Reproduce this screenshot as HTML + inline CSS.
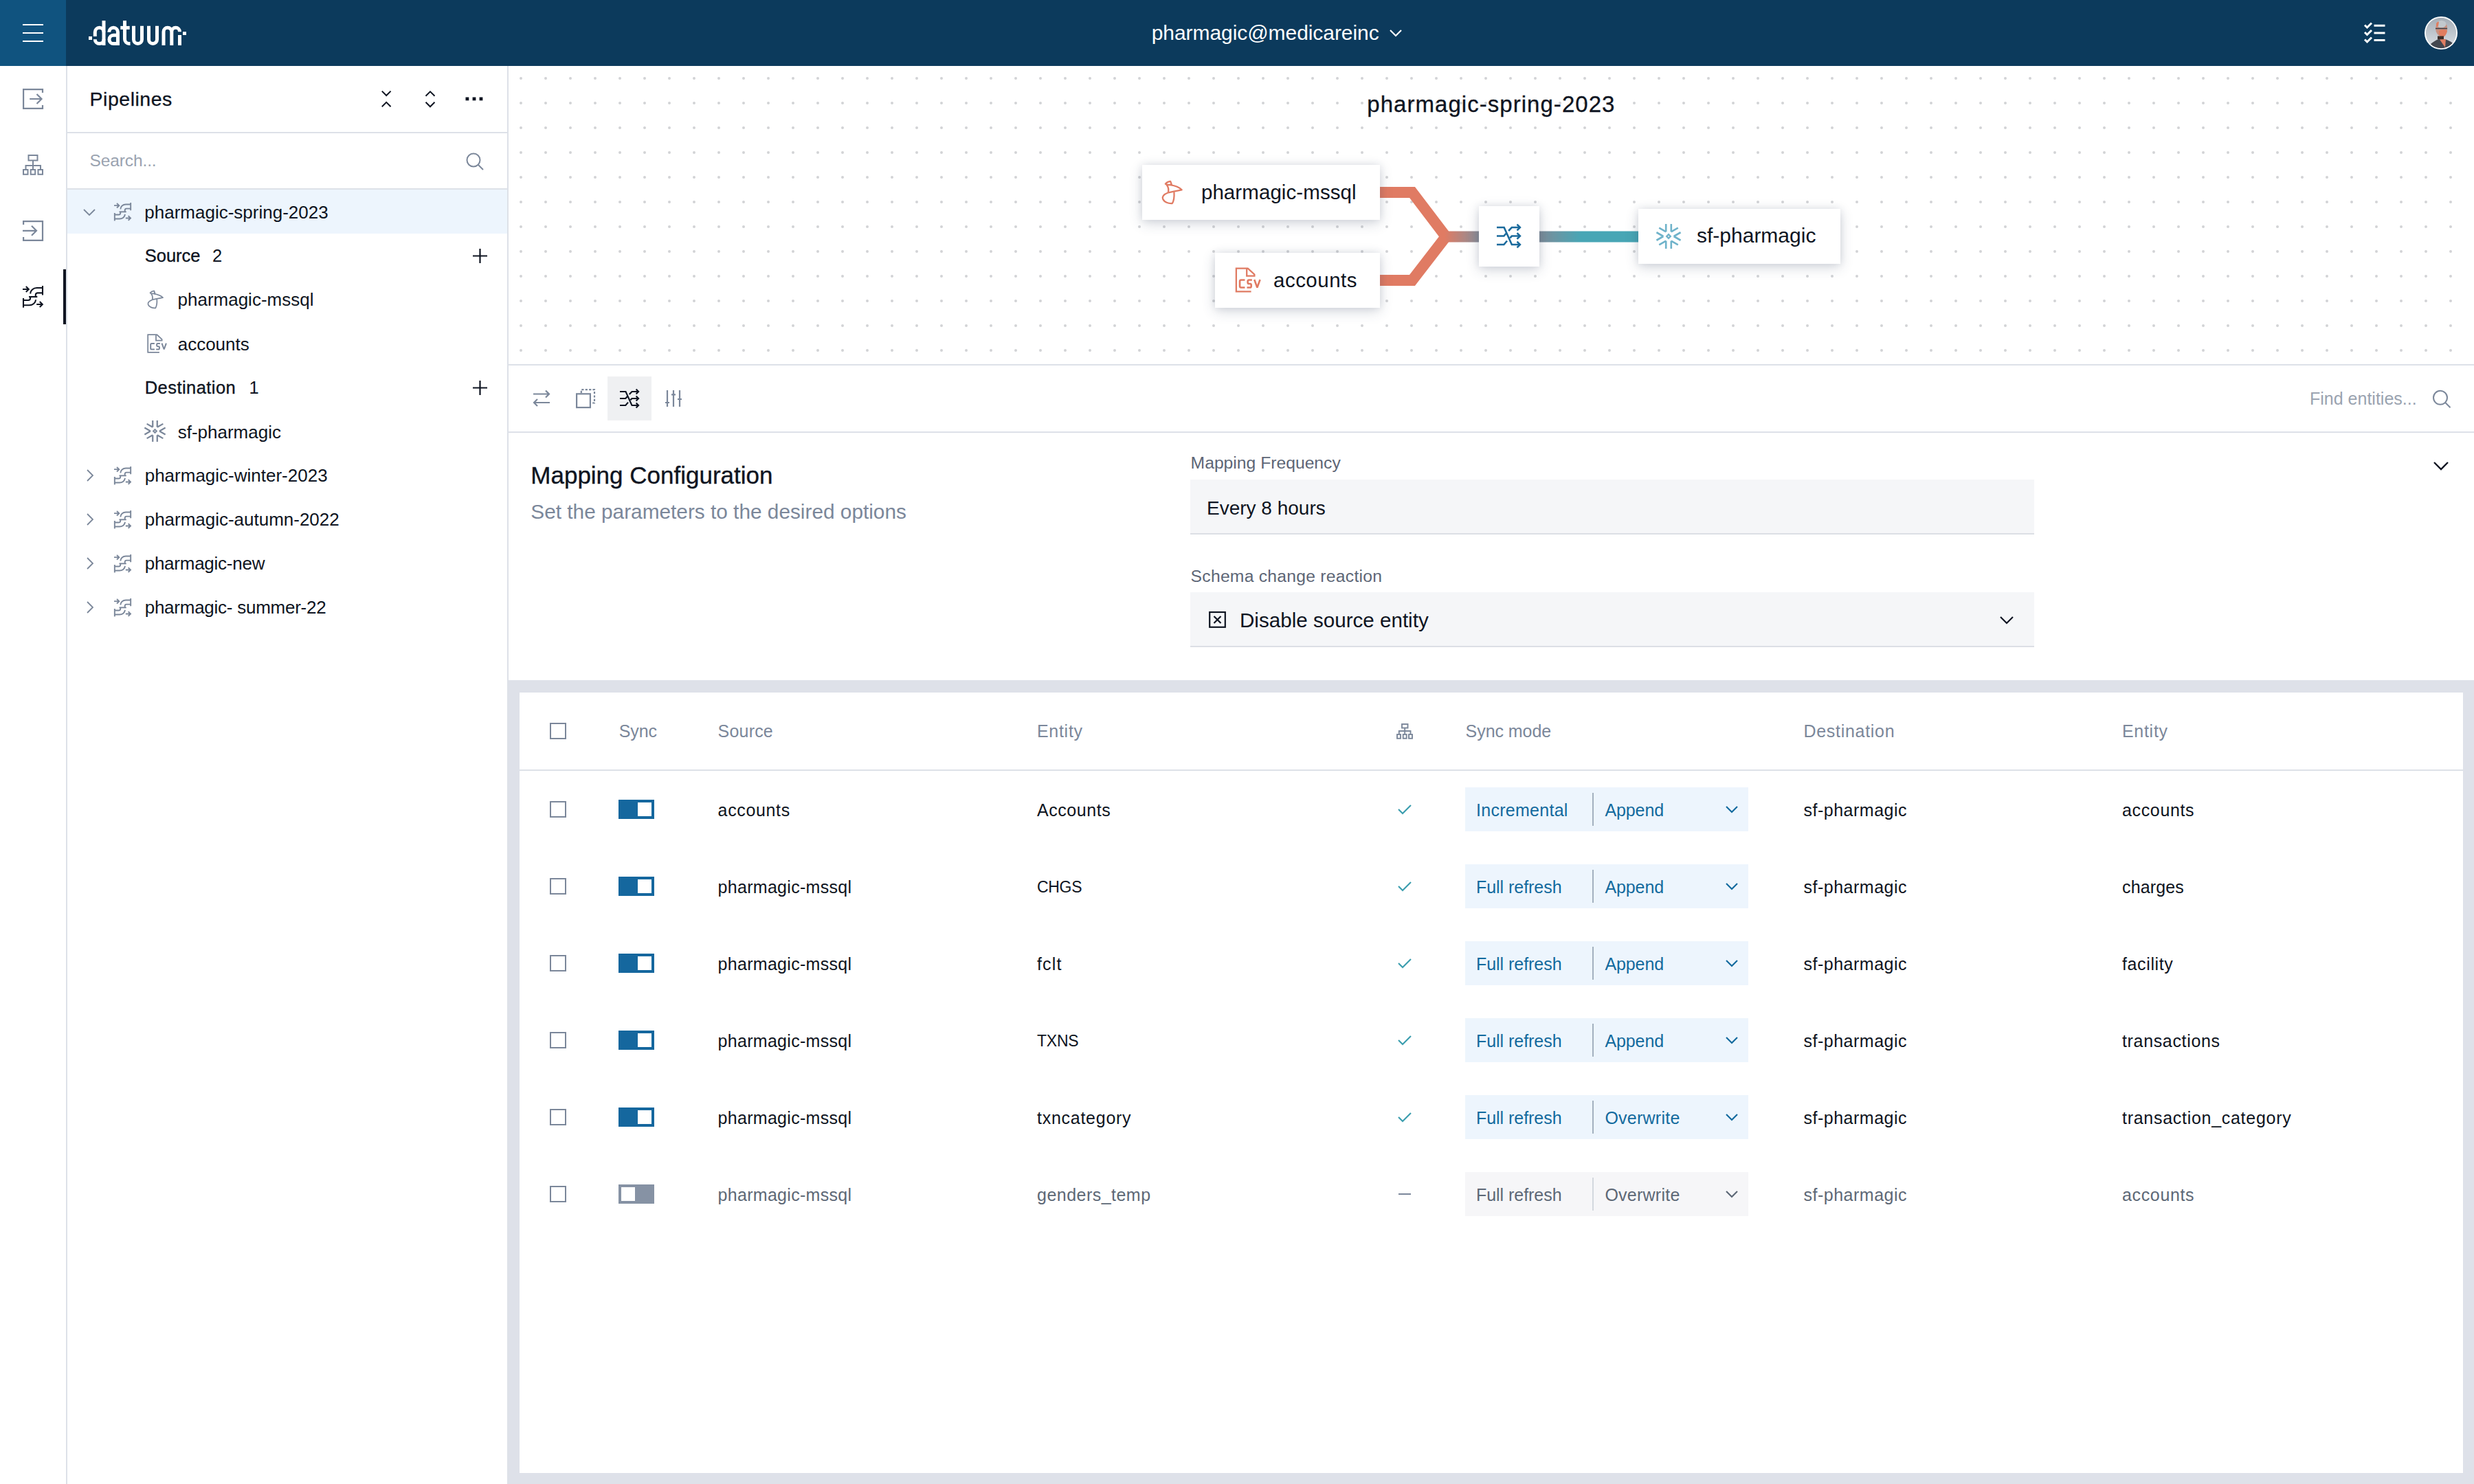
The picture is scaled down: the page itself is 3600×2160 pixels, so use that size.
<!DOCTYPE html>
<html><head><meta charset="utf-8"><title>datuum</title>
<style>
html,body{margin:0;padding:0;}
body{width:3600px;height:2160px;overflow:hidden;position:relative;background:#fff;font-family:"Liberation Sans",sans-serif;}
.a{position:absolute;}
.t{position:absolute;white-space:nowrap;font-family:"Liberation Sans",sans-serif;}
svg{overflow:visible;}
</style></head><body>
<div class="a" style="left:0px;top:0px;width:3600px;height:96px;background:#0c3a5c;"></div>
<div class="a" style="left:0px;top:0px;width:96px;height:96px;background:#10537f;"></div>
<svg class="a" style="left:0px;top:0px;" width="96" height="96" viewBox="0 0 96 96" fill="none"><path d="M33 36H63M33 48H63M33 60H63" stroke="#fff" stroke-width="2.2"/></svg>
<svg class="a" style="left:120px;top:20px;" width="160" height="56" viewBox="120 20 160 56" fill="none"><g stroke="#fff" stroke-width="5" fill="none"><path d="M151 30V66"/><path d="M151 46.65A6.35 6.35 0 0 0 138.3 46.65V53"/><path d="M138.3 58V57.15A6.35 6.35 0 0 0 151 57.15"/><path d="M158.75 46.65A6.35 6.35 0 0 1 171.45 46.65V66"/><path d="M171.45 51.3H165.1A6.1 6.1 0 0 0 165.1 63.5H171.45"/><path d="M181.5 30V57A6.5 6.5 0 0 0 188 63.5H189.5"/><path d="M175.3 40.4H188.7"/><path d="M194.5 37.8V57.5A6 6 0 0 0 206.5 57.5V37.8"/><path d="M216.5 37.8V57.5A6 6 0 0 0 228.5 57.5V37.8"/><path d="M238 66V46.2A5.9 5.9 0 0 1 249.8 46.2V66M249.8 46.2A5.85 5.85 0 0 1 261.5 46.2M261.5 51V66"/></g><rect x="129" y="53" width="5" height="5" fill="#fff"/><rect x="266" y="46.2" width="5" height="4.8" fill="#fff"/></svg>
<div class="t " style="left:1675.7px;top:32.81px;font-size:30px;line-height:30px;color:#ffffff;letter-spacing:-0.062px;">pharmagic@medicareinc</div>
<svg class="a" style="left:2018px;top:36px;" width="26" height="24" viewBox="0 0 26 24" fill="none"><path d="M5 8L13 16L21 8" stroke="#fff" stroke-width="2.2"/></svg>
<svg class="a" style="left:3440px;top:0px;" width="32" height="96" viewBox="0 0 32 96" fill="none"><g stroke="#fff" stroke-width="3" fill="none"><path d="M1 36.5L4.5 40L11 33.5"/><path d="M1 47L4.5 50.5L11 44"/><path d="M1 57.5L4.5 61L11 54.5"/><path d="M14.5 37.3H30.5M14.5 47.9H30.5M14.5 58.5H30.5"/></g></svg>
<svg class="a" style="left:3528px;top:24px;" width="48" height="48" viewBox="0 0 48 48" fill="none"><defs><clipPath id="avc"><circle cx="24" cy="24" r="22.2"/></clipPath><linearGradient id="avg" x1="0" y1="0" x2="0" y2="1"><stop offset="0" stop-color="#a3abb4"/><stop offset="0.6" stop-color="#c5ccd3"/><stop offset="1" stop-color="#dfe2e6"/></linearGradient></defs><circle cx="24" cy="24" r="24" fill="#fff"/><g clip-path="url(#avc)"><rect width="48" height="48" fill="url(#avg)"/><ellipse cx="24.7" cy="17.5" rx="8.6" ry="11.3" fill="#c99080"/><ellipse cx="24.6" cy="11" rx="7" ry="5.2" fill="#c2c8cd"/><path d="M17 10.5C18 8 20 7 21 8L20 14L17 15Z" fill="#e07e60"/><path d="M21 21C24 19 30 18 33 21C32 27 29 30 25 30C22 29 21 26 21 21Z" fill="#e07d5f"/><path d="M16 17.5H33" stroke="#3a4048" stroke-width="1.3"/><rect x="19" y="28.5" width="9" height="5" fill="#3b2e29"/><path d="M6 48L8 41C12 37 17 34 21 33L30 33C35 35 40 37 43 41L45 48Z" fill="#43474f"/><path d="M22 33.5L31 33L30 45Z" fill="#df7e62"/></g></svg>
<div class="a" style="left:96px;top:96px;width:2px;height:2064px;background:#dde1e8;"></div>
<svg class="a" style="left:0px;top:96px;" width="96" height="96" viewBox="0 96 96 96" fill="none"><g stroke="#7b879a" stroke-width="2.2" fill="none"><path d="M62 135V130.1H34.1V157.8H62V153"/><path d="M43.2 144H60.5M53.5 137L60.5 144L53.5 151"/></g></svg>
<svg class="a" style="left:0px;top:192px;" width="96" height="96" viewBox="0 192 96 96" fill="none"><g stroke="#7b879a" stroke-width="2" fill="none"><rect x="41.5" y="226" width="13" height="7.5"/><path d="M48 233.5V241M37.5 246V241H59V246M48 241V246"/><rect x="34" y="247" width="6.5" height="6.8"/><rect x="44.7" y="247" width="6.5" height="6.8"/><rect x="55.5" y="247" width="6.5" height="6.8"/></g></svg>
<svg class="a" style="left:0px;top:288px;" width="96" height="96" viewBox="0 288 96 96" fill="none"><g stroke="#7b879a" stroke-width="2.2" fill="none"><path d="M34.1 327V322.1H62V349.8H34.1V345"/><path d="M33 335.8H53M46 328.8L53 335.8L46 342.8"/></g></svg>
<svg class="a" style="left:33px;top:416px;" width="30" height="32" viewBox="0 0 30 32" fill="none"><g stroke="#0e1421" stroke-width="2.1" fill="none"><path d="M0 5H8.5M4.8 1L8.8 5L4.8 9"/><path d="M29 0V13.5"/><path d="M29 3H20.5A9.3 8.5 0 0 0 11.2 11.5"/><path d="M29 10.4H21.5A3 3 0 0 0 18.8 13.4V16"/><path d="M9 16H21.3"/><path d="M11.1 16V18A3 3 0 0 1 8.1 21H1"/><path d="M1 18V31.7"/><path d="M1 28.3H9.5A9.6 8.5 0 0 0 19.1 20.3"/><path d="M20.2 27H29M24.8 23L28.8 27L24.8 31"/></g></svg>
<div class="a" style="left:92px;top:392px;width:4px;height:80px;background:#0e1421;"></div>
<div class="a" style="left:738px;top:96px;width:2px;height:2064px;background:#dde1e8;"></div>
<div class="t " style="left:130.6px;top:130.37px;font-size:28.5px;line-height:28.5px;color:#0e1421;letter-spacing:0.5px;-webkit-text-stroke:0.3px #0e1421;">Pipelines</div>
<svg class="a" style="left:540px;top:110px;" width="180" height="70" viewBox="540 110 180 70" fill="none"><g stroke="#0e1421" stroke-width="2" fill="none"><path d="M555.8 132.6L562.2 139L568.6 132.6"/><path d="M555.8 155.2L562.2 148.8L568.6 155.2"/><path d="M619.5 139.8L626 133.3L632.5 139.8"/><path d="M619.5 148.8L626 155.3L632.5 148.8"/></g><g fill="#0e1421"><rect x="677.5" y="141.5" width="4.8" height="4.8"/><rect x="687.6" y="141.5" width="4.8" height="4.8"/><rect x="697.6" y="141.5" width="4.8" height="4.8"/></g></svg>
<div class="a" style="left:98px;top:192px;width:640px;height:2px;background:#dde1e8;"></div>
<div class="t " style="left:130.6px;top:222.26px;font-size:24.5px;line-height:24.5px;color:#9aa3b0;letter-spacing:-0.125px;">Search...</div>
<svg class="a" style="left:670px;top:214px;" width="40" height="40" viewBox="670 214 40 40" fill="none"><g stroke="#7b879a" stroke-width="2" fill="none"><circle cx="689" cy="233" r="9.5"/><path d="M696 240L703 247"/></g></svg>
<div class="a" style="left:98px;top:274px;width:640px;height:2px;background:#dde1e8;"></div>
<div class="a" style="left:98px;top:276px;width:640px;height:64px;background:#edf5fd;"></div>
<svg class="a" style="left:120px;top:299px;" width="20" height="20" viewBox="0 0 20 20" fill="none"><path d="M2 6L10 14L18 6" stroke="#7b879a" stroke-width="1.8"/></svg>
<svg class="a" style="left:165.5px;top:295px;" width="25" height="26.666666666666668" viewBox="0 0 30 32" fill="none"><g stroke="#7b879a" stroke-width="2.3" fill="none"><path d="M0 5H8.5M4.8 1L8.8 5L4.8 9"/><path d="M29 0V13.5"/><path d="M29 3H20.5A9.3 8.5 0 0 0 11.2 11.5"/><path d="M29 10.4H21.5A3 3 0 0 0 18.8 13.4V16"/><path d="M9 16H21.3"/><path d="M11.1 16V18A3 3 0 0 1 8.1 21H1"/><path d="M1 18V31.7"/><path d="M1 28.3H9.5A9.6 8.5 0 0 0 19.1 20.3"/><path d="M20.2 27H29M24.8 23L28.8 27L24.8 31"/></g></svg>
<div class="t " style="left:210.3px;top:295.79px;font-size:26px;line-height:26px;color:#0e1421;">pharmagic-spring-2023</div>
<div class="t " style="left:210.7px;top:359.71px;font-size:25.5px;line-height:25.5px;color:#0e1421;-webkit-text-stroke:0.35px #0e1421;">Source</div>
<div class="t " style="left:309px;top:359.71px;font-size:25.5px;line-height:25.5px;color:#0e1421;">2</div>
<svg class="a" style="left:688px;top:361.5px;" width="21" height="21" viewBox="0 0 21 21" fill="none"><path d="M10.5 0V21M0 10.5H21" stroke="#0e1421" stroke-width="2.2"/></svg>
<svg class="a" style="left:214px;top:422px;" width="24.0" height="28.0" viewBox="0 0 24 28" fill="none"><g stroke="#7b879a" stroke-width="1.75" fill="none" stroke-linejoin="round"><path d="M4.5 4.4C6 2.6 8.5 1.6 10.2 1.4L11.5 5.1C9 5.6 6 5.8 4.5 4.4Z"/><path d="M5.8 5.2C7.6 7.5 8.6 10.4 7.6 13.9"/><path d="M10 5.6C15.5 6.5 20 8.2 23 11.1C18 12 12.5 13 7.8 14.2"/><path d="M7.8 14.2C3.2 16 0.6 18.6 1.6 21.3C3.2 25 8 26.8 12.2 26.4C14 23.8 14.7 20 14.3 13.4"/></g></svg>
<div class="t " style="left:258.5px;top:423.19px;font-size:26px;line-height:26px;color:#0e1421;">pharmagic-mssql</div>
<svg class="a" style="left:213px;top:485px;" width="30.0" height="30.0" viewBox="0 0 30 30" fill="none"><g stroke="#7b879a" fill="none"><g stroke-width="1.75"><path d="M15.6 2H2.2V27.9H18.9"/><path d="M14 2.3V10.5H22.6V8.8L15.2 2"/></g><g stroke-width="2.0"><path d="M11.9 15H7.7Q6.2 15 6.2 16.5V22Q6.2 23.5 7.7 23.5H11.9"/><path d="M19.9 15H16.5Q15.1 15 15.1 16.4V17.8Q15.1 19.2 16.5 19.2H17.6Q19 19.2 19 20.6V22.1Q19 23.5 17.6 23.5H14.2"/><path d="M22.5 14.6L25.7 23.5L28.9 14.6" stroke-linejoin="bevel"/></g></g></svg>
<div class="t " style="left:258.7px;top:487.59px;font-size:26px;line-height:26px;color:#0e1421;">accounts</div>
<div class="t " style="left:210.7px;top:552.21px;font-size:25.5px;line-height:25.5px;color:#0e1421;letter-spacing:0.45px;-webkit-text-stroke:0.35px #0e1421;">Destination</div>
<div class="t " style="left:362.6px;top:552.21px;font-size:25.5px;line-height:25.5px;color:#0e1421;">1</div>
<svg class="a" style="left:688px;top:553.5px;" width="21" height="21" viewBox="0 0 21 21" fill="none"><path d="M10.5 0V21M0 10.5H21" stroke="#0e1421" stroke-width="2.2"/></svg>
<svg class="a" style="left:210px;top:612px;" width="31" height="31" viewBox="0 0 36 36" fill="none"><path d="M35.56 23.75L25.60 18.00M35.56 12.25L25.60 18.00M31.76 5.67L21.80 11.42M21.80 -0.08L21.80 11.42M14.20 -0.08L14.20 11.42M4.24 5.67L14.20 11.42M0.44 12.25L10.40 18.00M0.44 23.75L10.40 18.00M4.24 30.33L14.20 24.58M14.20 36.08L14.20 24.58M21.80 36.08L21.80 24.58M31.76 30.33L21.80 24.58" stroke="#7b879a" stroke-width="2.6" fill="none"/><path d="M18 13.6L22.4 18L18 22.4L13.6 18Z" fill="#7b879a"/><rect x="17" y="17" width="2" height="2" fill="#d9dde2"/></svg>
<div class="t " style="left:258.7px;top:615.59px;font-size:26px;line-height:26px;color:#0e1421;">sf-pharmagic</div>
<svg class="a" style="left:121px;top:681.9px;" width="20" height="20" viewBox="0 0 20 20" fill="none"><path d="M6 2L14 10L6 18" stroke="#7b879a" stroke-width="1.8"/></svg>
<svg class="a" style="left:165.5px;top:678.9px;" width="25" height="26.666666666666668" viewBox="0 0 30 32" fill="none"><g stroke="#7b879a" stroke-width="2.3" fill="none"><path d="M0 5H8.5M4.8 1L8.8 5L4.8 9"/><path d="M29 0V13.5"/><path d="M29 3H20.5A9.3 8.5 0 0 0 11.2 11.5"/><path d="M29 10.4H21.5A3 3 0 0 0 18.8 13.4V16"/><path d="M9 16H21.3"/><path d="M11.1 16V18A3 3 0 0 1 8.1 21H1"/><path d="M1 18V31.7"/><path d="M1 28.3H9.5A9.6 8.5 0 0 0 19.1 20.3"/><path d="M20.2 27H29M24.8 23L28.8 27L24.8 31"/></g></svg>
<div class="t " style="left:210.7px;top:678.89px;font-size:26px;line-height:26px;color:#0e1421;letter-spacing:0.0px;">pharmagic-winter-2023</div>
<svg class="a" style="left:121px;top:746.3px;" width="20" height="20" viewBox="0 0 20 20" fill="none"><path d="M6 2L14 10L6 18" stroke="#7b879a" stroke-width="1.8"/></svg>
<svg class="a" style="left:165.5px;top:743.3px;" width="25" height="26.666666666666668" viewBox="0 0 30 32" fill="none"><g stroke="#7b879a" stroke-width="2.3" fill="none"><path d="M0 5H8.5M4.8 1L8.8 5L4.8 9"/><path d="M29 0V13.5"/><path d="M29 3H20.5A9.3 8.5 0 0 0 11.2 11.5"/><path d="M29 10.4H21.5A3 3 0 0 0 18.8 13.4V16"/><path d="M9 16H21.3"/><path d="M11.1 16V18A3 3 0 0 1 8.1 21H1"/><path d="M1 18V31.7"/><path d="M1 28.3H9.5A9.6 8.5 0 0 0 19.1 20.3"/><path d="M20.2 27H29M24.8 23L28.8 27L24.8 31"/></g></svg>
<div class="t " style="left:210.7px;top:743.29px;font-size:26px;line-height:26px;color:#0e1421;letter-spacing:-0.013px;">pharmagic-autumn-2022</div>
<svg class="a" style="left:121px;top:810px;" width="20" height="20" viewBox="0 0 20 20" fill="none"><path d="M6 2L14 10L6 18" stroke="#7b879a" stroke-width="1.8"/></svg>
<svg class="a" style="left:165.5px;top:807px;" width="25" height="26.666666666666668" viewBox="0 0 30 32" fill="none"><g stroke="#7b879a" stroke-width="2.3" fill="none"><path d="M0 5H8.5M4.8 1L8.8 5L4.8 9"/><path d="M29 0V13.5"/><path d="M29 3H20.5A9.3 8.5 0 0 0 11.2 11.5"/><path d="M29 10.4H21.5A3 3 0 0 0 18.8 13.4V16"/><path d="M9 16H21.3"/><path d="M11.1 16V18A3 3 0 0 1 8.1 21H1"/><path d="M1 18V31.7"/><path d="M1 28.3H9.5A9.6 8.5 0 0 0 19.1 20.3"/><path d="M20.2 27H29M24.8 23L28.8 27L24.8 31"/></g></svg>
<div class="t " style="left:210.7px;top:806.99px;font-size:26px;line-height:26px;color:#0e1421;letter-spacing:-0.25px;">pharmagic-new</div>
<svg class="a" style="left:121px;top:874px;" width="20" height="20" viewBox="0 0 20 20" fill="none"><path d="M6 2L14 10L6 18" stroke="#7b879a" stroke-width="1.8"/></svg>
<svg class="a" style="left:165.5px;top:871px;" width="25" height="26.666666666666668" viewBox="0 0 30 32" fill="none"><g stroke="#7b879a" stroke-width="2.3" fill="none"><path d="M0 5H8.5M4.8 1L8.8 5L4.8 9"/><path d="M29 0V13.5"/><path d="M29 3H20.5A9.3 8.5 0 0 0 11.2 11.5"/><path d="M29 10.4H21.5A3 3 0 0 0 18.8 13.4V16"/><path d="M9 16H21.3"/><path d="M11.1 16V18A3 3 0 0 1 8.1 21H1"/><path d="M1 18V31.7"/><path d="M1 28.3H9.5A9.6 8.5 0 0 0 19.1 20.3"/><path d="M20.2 27H29M24.8 23L28.8 27L24.8 31"/></g></svg>
<div class="t " style="left:210.7px;top:870.99px;font-size:26px;line-height:26px;color:#0e1421;letter-spacing:-0.25px;">pharmagic- summer-22</div>
<svg class="a" style="left:740px;top:96px" width="2860" height="434"><defs><pattern id="dp" x="0" y="0" width="36" height="36" patternUnits="userSpaceOnUse"><circle cx="18" cy="18" r="2" fill="#d2d3d6"/></pattern></defs><rect width="2860" height="434" fill="url(#dp)"/></svg>
<div class="t " style="left:1989.3px;top:134.67px;font-size:33px;line-height:33px;color:#0e1421;letter-spacing:1.038px;-webkit-text-stroke:0.3px #0e1421;">pharmagic-spring-2023</div>
<svg class="a" style="left:1990px;top:260px;" width="420" height="170" viewBox="1990 260 420 170" fill="none"><defs><linearGradient id="g1" x1="2102" y1="0" x2="2152" y2="0" gradientUnits="userSpaceOnUse"><stop offset="0" stop-color="#e07b63"/><stop offset="1" stop-color="#8a8f99"/></linearGradient><linearGradient id="g2" x1="2240" y1="0" x2="2300" y2="0" gradientUnits="userSpaceOnUse"><stop offset="0" stop-color="#7e8c99"/><stop offset="1" stop-color="#48a6b5"/></linearGradient></defs><path d="M2000 280H2055L2104 344.5L2055 408H2000" stroke="#e07b63" stroke-width="16" fill="none" stroke-linejoin="miter"/><path d="M2100 344.5H2156" stroke="url(#g1)" stroke-width="16"/><path d="M2236 344.5H2390" stroke="url(#g2)" stroke-width="16"/></svg>
<div class="a" style="left:1662px;top:240px;width:346px;height:80px;background:#fff;box-shadow:0 5px 18px rgba(45,60,90,0.20),0 0 10px rgba(45,60,90,0.10);"></div>
<div class="a" style="left:1768px;top:368px;width:240px;height:80px;background:#fff;box-shadow:0 5px 18px rgba(45,60,90,0.20),0 0 10px rgba(45,60,90,0.10);"></div>
<div class="a" style="left:2152px;top:300px;width:88px;height:88px;background:#fff;box-shadow:0 5px 18px rgba(45,60,90,0.20),0 0 10px rgba(45,60,90,0.10);"></div>
<div class="a" style="left:2384px;top:304px;width:294px;height:80px;background:#fff;box-shadow:0 5px 18px rgba(45,60,90,0.20),0 0 10px rgba(45,60,90,0.10);"></div>
<svg class="a" style="left:1690.1px;top:262px;" width="30.96" height="36.120000000000005" viewBox="0 0 24 28" fill="none"><g stroke="#e07b63" stroke-width="1.75" fill="none" stroke-linejoin="round"><path d="M4.5 4.4C6 2.6 8.5 1.6 10.2 1.4L11.5 5.1C9 5.6 6 5.8 4.5 4.4Z"/><path d="M5.8 5.2C7.6 7.5 8.6 10.4 7.6 13.9"/><path d="M10 5.6C15.5 6.5 20 8.2 23 11.1C18 12 12.5 13 7.8 14.2"/><path d="M7.8 14.2C3.2 16 0.6 18.6 1.6 21.3C3.2 25 8 26.8 12.2 26.4C14 23.8 14.7 20 14.3 13.4"/></g></svg>
<div class="t " style="left:1747.9px;top:264.83px;font-size:29.5px;line-height:29.5px;color:#0e1421;letter-spacing:0.079px;">pharmagic-mssql</div>
<svg class="a" style="left:1795.5px;top:387.5px;" width="39.0" height="39.0" viewBox="0 0 30 30" fill="none"><g stroke="#e07b63" fill="none"><g stroke-width="1.75"><path d="M15.6 2H2.2V27.9H18.9"/><path d="M14 2.3V10.5H22.6V8.8L15.2 2"/></g><g stroke-width="2.0"><path d="M11.9 15H7.7Q6.2 15 6.2 16.5V22Q6.2 23.5 7.7 23.5H11.9"/><path d="M19.9 15H16.5Q15.1 15 15.1 16.4V17.8Q15.1 19.2 16.5 19.2H17.6Q19 19.2 19 20.6V22.1Q19 23.5 17.6 23.5H14.2"/><path d="M22.5 14.6L25.7 23.5L28.9 14.6" stroke-linejoin="bevel"/></g></g></svg>
<div class="t " style="left:1853px;top:393.03px;font-size:29.5px;line-height:29.5px;color:#0e1421;letter-spacing:0.486px;">accounts</div>
<svg class="a" style="left:2178px;top:326px;" width="35" height="35" viewBox="0 0 28 28" fill="none"><g stroke="#1a6a9c" stroke-width="2.1" fill="none"><path d="M0 4H8.5L17.5 24H26.5"/><path d="M0 14H8.3L10.9 11"/><path d="M15.4 16.3L17.5 14H26.5"/><path d="M0 24H8.3L12 19.6"/><path d="M13.7 8L17.5 4H26.5"/><path d="M23.6 0.5L27.1 4L23.6 7.5M23.6 10.5L27.1 14L23.6 17.5M23.6 20.5L27.1 24L23.6 27.5"/></g></svg>
<svg class="a" style="left:2410px;top:326px;" width="36" height="36" viewBox="0 0 36 36" fill="none"><path d="M35.56 23.75L25.60 18.00M35.56 12.25L25.60 18.00M31.76 5.67L21.80 11.42M21.80 -0.08L21.80 11.42M14.20 -0.08L14.20 11.42M4.24 5.67L14.20 11.42M0.44 12.25L10.40 18.00M0.44 23.75L10.40 18.00M4.24 30.33L14.20 24.58M14.20 36.08L14.20 24.58M21.80 36.08L21.80 24.58M31.76 30.33L21.80 24.58" stroke="#6fb3ca" stroke-width="2.6" fill="none"/><path d="M18 13.6L22.4 18L18 22.4L13.6 18Z" fill="#6fb3ca"/><rect x="17" y="17" width="2" height="2" fill="#d9dde2"/></svg>
<div class="t " style="left:2469px;top:328.41px;font-size:30px;line-height:30px;color:#0e1421;">sf-pharmagic</div>
<div class="a" style="left:740px;top:530px;width:2860px;height:2px;background:#dde1e8;"></div>
<div class="a" style="left:884px;top:548px;width:64px;height:64px;background:#eff0f2;"></div>
<svg class="a" style="left:770px;top:560px;" width="36" height="40" viewBox="770 560 36 40" fill="none"><g stroke="#7b879a" stroke-width="2.2" fill="none"><path d="M776 573.5H799M794 568.5L799 573.5L794 578.5"/><path d="M800 586H777M782 581L777 586L782 591"/></g></svg>
<svg class="a" style="left:830px;top:560px;" width="40" height="40" viewBox="830 560 40 40" fill="none"><g stroke="#7b879a" stroke-width="2.2" fill="none"><rect x="839.1" y="573.3" width="19.8" height="19.8"/><path d="M845.8 572V567.1H865V586.5H859.5" stroke-dasharray="3.2 2.2"/></g></svg>
<svg class="a" style="left:902px;top:566px;" width="28" height="28" viewBox="0 0 28 28" fill="none"><g stroke="#0e1421" stroke-width="2.15" fill="none"><path d="M0 4H8.5L17.5 24H26.5"/><path d="M0 14H8.3L10.9 11"/><path d="M15.4 16.3L17.5 14H26.5"/><path d="M0 24H8.3L12 19.6"/><path d="M13.7 8L17.5 4H26.5"/><path d="M23.6 0.5L27.1 4L23.6 7.5M23.6 10.5L27.1 14L23.6 17.5M23.6 20.5L27.1 24L23.6 27.5"/></g></svg>
<svg class="a" style="left:960px;top:560px;" width="40" height="40" viewBox="960 560 40 40" fill="none"><g stroke="#7b879a" stroke-width="2.2" fill="none"><path d="M971 568V592M980 568V592M989 568V592"/><path d="M968 586H974M977 574.3H983M986 581H992"/></g></svg>
<div class="t " style="left:3361px;top:567.84px;font-size:25px;line-height:25px;color:#9aa3b0;">Find entities...</div>
<svg class="a" style="left:3530px;top:560px;" width="40" height="40" viewBox="3530 560 40 40" fill="none"><g stroke="#7b879a" stroke-width="2" fill="none"><circle cx="3551" cy="578.8" r="10"/><path d="M3558.5 586.3L3565.5 593.3"/></g></svg>
<div class="a" style="left:740px;top:628px;width:2860px;height:2px;background:#dde1e8;"></div>
<div class="t " style="left:772.3px;top:673.97px;font-size:35px;line-height:35px;color:#0e1421;-webkit-text-stroke:0.35px #0e1421;">Mapping Configuration</div>
<div class="t " style="left:772.3px;top:729.77px;font-size:29.8px;line-height:29.8px;color:#7b879a;">Set the parameters to the desired options</div>
<svg class="a" style="left:3540px;top:670px;" width="24" height="18" viewBox="0 0 24 18" fill="none"><path d="M2 3L12 13L22 3" stroke="#0e1421" stroke-width="2.4"/></svg>
<div class="t " style="left:1732.6px;top:662.09px;font-size:24.7px;line-height:24.7px;color:#5d6676;">Mapping Frequency</div>
<div class="a" style="left:1732px;top:698px;width:1228px;height:78px;background:#f5f6f8;border-bottom:2px solid #dcdfe5;"></div>
<div class="t " style="left:1756px;top:725.60px;font-size:28px;line-height:28px;color:#0e1421;">Every 8 hours</div>
<div class="t " style="left:1732.6px;top:826.69px;font-size:24.7px;line-height:24.7px;color:#5d6676;letter-spacing:0.25px;">Schema change reaction</div>
<div class="a" style="left:1732px;top:862px;width:1228px;height:78px;background:#f5f6f8;border-bottom:2px solid #dcdfe5;"></div>
<svg class="a" style="left:1758px;top:889px;" width="28" height="26" viewBox="0 0 28 26" fill="none"><g stroke="#0e1421" stroke-width="2.2" fill="none"><rect x="2.2" y="2" width="22.6" height="21.8"/><path d="M8.5 8L18.5 18M18.5 8L8.5 18"/></g></svg>
<div class="t " style="left:1804px;top:888.14px;font-size:29.6px;line-height:29.6px;color:#0e1421;">Disable source entity</div>
<svg class="a" style="left:2908px;top:894px;" width="24" height="18" viewBox="0 0 24 18" fill="none"><path d="M3 4L12 13L21 4" stroke="#0e1421" stroke-width="2.2"/></svg>
<div class="a" style="left:740px;top:990px;width:2860px;height:1170px;background:#dee1e9;"></div>
<div class="a" style="left:756px;top:1008px;width:2828px;height:1136px;background:#ffffff;"></div>
<div class="a" style="left:800px;top:1052px;width:24px;height:24px;background:transparent;box-sizing:border-box;border:2px solid #7b879a;"></div>
<div class="t " style="left:900.7px;top:1052.04px;font-size:25px;line-height:25px;color:#7b879a;letter-spacing:-0.067px;">Sync</div>
<div class="t " style="left:1044.6px;top:1052.04px;font-size:25px;line-height:25px;color:#7b879a;letter-spacing:0.19px;">Source</div>
<div class="t " style="left:1509px;top:1052.04px;font-size:25px;line-height:25px;color:#7b879a;letter-spacing:0.7px;">Entity</div>
<svg class="a" style="left:2032px;top:1052.5px;" width="24" height="23" viewBox="0 0 24 23" fill="none"><g stroke="#7b879a" stroke-width="1.9" fill="none"><rect x="8" y="1" width="8.5" height="5.5"/><path d="M12.2 6.5V11M3.8 15V11H20.5V15M12.2 11V15"/><rect x="1" y="16" width="5" height="5.8"/><rect x="9.7" y="16" width="5" height="5.8"/><rect x="18" y="16" width="5" height="5.8"/></g></svg>
<div class="t " style="left:2132.6px;top:1052.04px;font-size:25px;line-height:25px;color:#7b879a;letter-spacing:-0.062px;">Sync mode</div>
<div class="t " style="left:2624.5px;top:1052.04px;font-size:25px;line-height:25px;color:#7b879a;letter-spacing:0.7px;">Destination</div>
<div class="t " style="left:3088px;top:1052.04px;font-size:25px;line-height:25px;color:#7b879a;letter-spacing:0.7px;">Entity</div>
<div class="a" style="left:756px;top:1120px;width:2828px;height:2px;background:#dde1e8;"></div>
<div class="a" style="left:800px;top:1166px;width:24px;height:24px;background:transparent;box-sizing:border-box;border:2px solid #7b879a;"></div>
<div class="a" style="left:900px;top:1164px;width:52px;height:28px;background:#15679e;"></div>
<div class="a" style="left:928px;top:1168px;width:20px;height:20px;background:#fff;"></div>
<div class="t " style="left:1044.6px;top:1166.64px;font-size:25px;line-height:25px;color:#0e1421;letter-spacing:0.643px;">accounts</div>
<div class="t " style="left:1509px;top:1166.64px;font-size:25px;line-height:25px;color:#0e1421;letter-spacing:0.55px;">Accounts</div>
<svg class="a" style="left:2032px;top:1168px;" width="24" height="20" viewBox="0 0 24 20" fill="none"><path d="M3 10L9 16L21 4" stroke="#3c9eaf" stroke-width="2.2" fill="none"/></svg>
<div class="a" style="left:2132px;top:1146px;width:412px;height:64px;background:#edf5fd;"></div>
<div class="a" style="left:2317px;top:1154px;width:2px;height:48px;background:#a3b1bf;"></div>
<div class="t " style="left:2148px;top:1166.64px;font-size:25px;line-height:25px;color:#136a9e;letter-spacing:0.28px;">Incremental</div>
<div class="t " style="left:2335.4px;top:1166.64px;font-size:25px;line-height:25px;color:#136a9e;letter-spacing:-0.09px;">Append</div>
<svg class="a" style="left:2510px;top:1168px;" width="20" height="20" viewBox="0 0 20 20" fill="none"><path d="M2 6L10 14L18 6" stroke="#136a9e" stroke-width="2.2" fill="none"/></svg>
<div class="t " style="left:2624.5px;top:1166.64px;font-size:25px;line-height:25px;color:#0e1421;letter-spacing:0.5px;">sf-pharmagic</div>
<div class="t " style="left:3088px;top:1166.64px;font-size:25px;line-height:25px;color:#0e1421;letter-spacing:0.643px;">accounts</div>
<div class="a" style="left:800px;top:1278px;width:24px;height:24px;background:transparent;box-sizing:border-box;border:2px solid #7b879a;"></div>
<div class="a" style="left:900px;top:1276px;width:52px;height:28px;background:#15679e;"></div>
<div class="a" style="left:928px;top:1280px;width:20px;height:20px;background:#fff;"></div>
<div class="t " style="left:1044.6px;top:1278.64px;font-size:25px;line-height:25px;color:#0e1421;letter-spacing:0.289px;">pharmagic-mssql</div>
<div class="t " style="left:1509px;top:1280.33px;font-size:23px;line-height:23px;color:#0e1421;letter-spacing:-0.3px;">CHGS</div>
<svg class="a" style="left:2032px;top:1280px;" width="24" height="20" viewBox="0 0 24 20" fill="none"><path d="M3 10L9 16L21 4" stroke="#3c9eaf" stroke-width="2.2" fill="none"/></svg>
<div class="a" style="left:2132px;top:1258px;width:412px;height:64px;background:#edf5fd;"></div>
<div class="a" style="left:2317px;top:1266px;width:2px;height:48px;background:#a3b1bf;"></div>
<div class="t " style="left:2148px;top:1278.64px;font-size:25px;line-height:25px;color:#136a9e;letter-spacing:-0.045px;">Full refresh</div>
<div class="t " style="left:2335.4px;top:1278.64px;font-size:25px;line-height:25px;color:#136a9e;letter-spacing:-0.09px;">Append</div>
<svg class="a" style="left:2510px;top:1280px;" width="20" height="20" viewBox="0 0 20 20" fill="none"><path d="M2 6L10 14L18 6" stroke="#136a9e" stroke-width="2.2" fill="none"/></svg>
<div class="t " style="left:2624.5px;top:1278.64px;font-size:25px;line-height:25px;color:#0e1421;letter-spacing:0.5px;">sf-pharmagic</div>
<div class="t " style="left:3088px;top:1278.64px;font-size:25px;line-height:25px;color:#0e1421;letter-spacing:0.133px;">charges</div>
<div class="a" style="left:800px;top:1390px;width:24px;height:24px;background:transparent;box-sizing:border-box;border:2px solid #7b879a;"></div>
<div class="a" style="left:900px;top:1388px;width:52px;height:28px;background:#15679e;"></div>
<div class="a" style="left:928px;top:1392px;width:20px;height:20px;background:#fff;"></div>
<div class="t " style="left:1044.6px;top:1390.64px;font-size:25px;line-height:25px;color:#0e1421;letter-spacing:0.289px;">pharmagic-mssql</div>
<div class="t " style="left:1509px;top:1390.64px;font-size:25px;line-height:25px;color:#0e1421;letter-spacing:1.167px;">fclt</div>
<svg class="a" style="left:2032px;top:1392px;" width="24" height="20" viewBox="0 0 24 20" fill="none"><path d="M3 10L9 16L21 4" stroke="#3c9eaf" stroke-width="2.2" fill="none"/></svg>
<div class="a" style="left:2132px;top:1370px;width:412px;height:64px;background:#edf5fd;"></div>
<div class="a" style="left:2317px;top:1378px;width:2px;height:48px;background:#a3b1bf;"></div>
<div class="t " style="left:2148px;top:1390.64px;font-size:25px;line-height:25px;color:#136a9e;letter-spacing:-0.045px;">Full refresh</div>
<div class="t " style="left:2335.4px;top:1390.64px;font-size:25px;line-height:25px;color:#136a9e;letter-spacing:-0.09px;">Append</div>
<svg class="a" style="left:2510px;top:1392px;" width="20" height="20" viewBox="0 0 20 20" fill="none"><path d="M2 6L10 14L18 6" stroke="#136a9e" stroke-width="2.2" fill="none"/></svg>
<div class="t " style="left:2624.5px;top:1390.64px;font-size:25px;line-height:25px;color:#0e1421;letter-spacing:0.5px;">sf-pharmagic</div>
<div class="t " style="left:3088px;top:1390.64px;font-size:25px;line-height:25px;color:#0e1421;letter-spacing:0.629px;">facility</div>
<div class="a" style="left:800px;top:1502px;width:24px;height:24px;background:transparent;box-sizing:border-box;border:2px solid #7b879a;"></div>
<div class="a" style="left:900px;top:1500px;width:52px;height:28px;background:#15679e;"></div>
<div class="a" style="left:928px;top:1504px;width:20px;height:20px;background:#fff;"></div>
<div class="t " style="left:1044.6px;top:1502.64px;font-size:25px;line-height:25px;color:#0e1421;letter-spacing:0.289px;">pharmagic-mssql</div>
<div class="t " style="left:1509px;top:1504.33px;font-size:23px;line-height:23px;color:#0e1421;letter-spacing:-0.217px;">TXNS</div>
<svg class="a" style="left:2032px;top:1504px;" width="24" height="20" viewBox="0 0 24 20" fill="none"><path d="M3 10L9 16L21 4" stroke="#3c9eaf" stroke-width="2.2" fill="none"/></svg>
<div class="a" style="left:2132px;top:1482px;width:412px;height:64px;background:#edf5fd;"></div>
<div class="a" style="left:2317px;top:1490px;width:2px;height:48px;background:#a3b1bf;"></div>
<div class="t " style="left:2148px;top:1502.64px;font-size:25px;line-height:25px;color:#136a9e;letter-spacing:-0.045px;">Full refresh</div>
<div class="t " style="left:2335.4px;top:1502.64px;font-size:25px;line-height:25px;color:#136a9e;letter-spacing:-0.09px;">Append</div>
<svg class="a" style="left:2510px;top:1504px;" width="20" height="20" viewBox="0 0 20 20" fill="none"><path d="M2 6L10 14L18 6" stroke="#136a9e" stroke-width="2.2" fill="none"/></svg>
<div class="t " style="left:2624.5px;top:1502.64px;font-size:25px;line-height:25px;color:#0e1421;letter-spacing:0.5px;">sf-pharmagic</div>
<div class="t " style="left:3088px;top:1502.64px;font-size:25px;line-height:25px;color:#0e1421;letter-spacing:0.659px;">transactions</div>
<div class="a" style="left:800px;top:1614px;width:24px;height:24px;background:transparent;box-sizing:border-box;border:2px solid #7b879a;"></div>
<div class="a" style="left:900px;top:1612px;width:52px;height:28px;background:#15679e;"></div>
<div class="a" style="left:928px;top:1616px;width:20px;height:20px;background:#fff;"></div>
<div class="t " style="left:1044.6px;top:1614.64px;font-size:25px;line-height:25px;color:#0e1421;letter-spacing:0.289px;">pharmagic-mssql</div>
<div class="t " style="left:1509px;top:1614.64px;font-size:25px;line-height:25px;color:#0e1421;letter-spacing:0.735px;">txncategory</div>
<svg class="a" style="left:2032px;top:1616px;" width="24" height="20" viewBox="0 0 24 20" fill="none"><path d="M3 10L9 16L21 4" stroke="#3c9eaf" stroke-width="2.2" fill="none"/></svg>
<div class="a" style="left:2132px;top:1594px;width:412px;height:64px;background:#edf5fd;"></div>
<div class="a" style="left:2317px;top:1602px;width:2px;height:48px;background:#a3b1bf;"></div>
<div class="t " style="left:2148px;top:1614.64px;font-size:25px;line-height:25px;color:#136a9e;letter-spacing:-0.045px;">Full refresh</div>
<div class="t " style="left:2335.4px;top:1614.64px;font-size:25px;line-height:25px;color:#136a9e;letter-spacing:0.25px;">Overwrite</div>
<svg class="a" style="left:2510px;top:1616px;" width="20" height="20" viewBox="0 0 20 20" fill="none"><path d="M2 6L10 14L18 6" stroke="#136a9e" stroke-width="2.2" fill="none"/></svg>
<div class="t " style="left:2624.5px;top:1614.64px;font-size:25px;line-height:25px;color:#0e1421;letter-spacing:0.5px;">sf-pharmagic</div>
<div class="t " style="left:3088px;top:1614.64px;font-size:25px;line-height:25px;color:#0e1421;letter-spacing:0.716px;">transaction_category</div>
<div class="a" style="left:800px;top:1726px;width:24px;height:24px;background:transparent;box-sizing:border-box;border:2px solid #7b879a;"></div>
<div class="a" style="left:900px;top:1724px;width:52px;height:28px;background:#8692a4;"></div>
<div class="a" style="left:904px;top:1728px;width:20px;height:20px;background:#fff;"></div>
<div class="t " style="left:1044.6px;top:1726.64px;font-size:25px;line-height:25px;color:#5d6876;letter-spacing:0.289px;">pharmagic-mssql</div>
<div class="t " style="left:1509px;top:1726.64px;font-size:25px;line-height:25px;color:#5d6876;letter-spacing:0.477px;">genders_temp</div>
<div class="a" style="left:2035px;top:1737px;width:18px;height:2px;background:#7b879a;"></div>
<div class="a" style="left:2132px;top:1706px;width:412px;height:64px;background:#f6f6f8;"></div>
<div class="a" style="left:2317px;top:1714px;width:2px;height:48px;background:#d3d8de;"></div>
<div class="t " style="left:2148px;top:1726.64px;font-size:25px;line-height:25px;color:#5d6876;letter-spacing:-0.045px;">Full refresh</div>
<div class="t " style="left:2335.4px;top:1726.64px;font-size:25px;line-height:25px;color:#5d6876;letter-spacing:0.25px;">Overwrite</div>
<svg class="a" style="left:2510px;top:1728px;" width="20" height="20" viewBox="0 0 20 20" fill="none"><path d="M2 6L10 14L18 6" stroke="#5d6876" stroke-width="2.2" fill="none"/></svg>
<div class="t " style="left:2624.5px;top:1726.64px;font-size:25px;line-height:25px;color:#5d6876;letter-spacing:0.5px;">sf-pharmagic</div>
<div class="t " style="left:3088px;top:1726.64px;font-size:25px;line-height:25px;color:#5d6876;letter-spacing:0.643px;">accounts</div>
</body></html>
